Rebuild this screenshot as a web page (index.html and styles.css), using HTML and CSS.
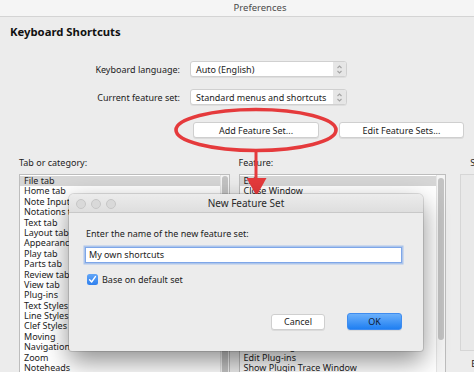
FILE: index.html
```html
<!DOCTYPE html>
<html lang="en">
<head>
    <meta charset="UTF-8">
    <meta name="viewport" content="width=device-width, initial-scale=1.0">
    <title>Preferences</title>
    <link rel="stylesheet" href="styles.css">
</head>
<body>
    <div class="window">
        <div class="titlebar">Preferences</div>
        <div class="content">
            <h1 class="heading">Keyboard Shortcuts</h1>
            <div class="form">
                <div class="form-row">
                    <span class="form-label">Keyboard language:</span>
                    <div class="popup">
                        <span class="popup-value">Auto (English)</span>
                        <span class="popup-arrows">
                            <svg width="13" height="15" viewBox="0 0 13 15"><path d="M4.5 6 L6.5 4 L8.5 6 M4.5 9 L6.5 11 L8.5 9" fill="none" stroke="#a3a3a3" stroke-width="1.1"/></svg>
                        </span>
                    </div>
                </div>
                <div class="form-row">
                    <span class="form-label">Current feature set:</span>
                    <div class="popup">
                        <span class="popup-value">Standard menus and shortcuts</span>
                        <span class="popup-arrows">
                            <svg width="13" height="15" viewBox="0 0 13 15"><path d="M4.5 6 L6.5 4 L8.5 6 M4.5 9 L6.5 11 L8.5 9" fill="none" stroke="#a3a3a3" stroke-width="1.1"/></svg>
                        </span>
                    </div>
                </div>
            </div>
            <div class="actions">
                <div class="button add">Add Feature Set...</div>
                <div class="button edit">Edit Feature Sets...</div>
            </div>
            <div class="lists">
                <div class="column category">
                    <div class="column-label">Tab or category:</div>
                    <div class="listbox">
                        <ul class="items">
                            <li class="selected">File tab</li>
                            <li>Home tab</li>
                            <li>Note Input tab</li>
                            <li>Notations tab</li>
                            <li>Text tab</li>
                            <li>Layout tab</li>
                            <li>Appearance tab</li>
                            <li>Play tab</li>
                            <li>Parts tab</li>
                            <li>Review tab</li>
                            <li>View tab</li>
                            <li>Plug-ins</li>
                            <li>Text Styles</li>
                            <li>Line Styles</li>
                            <li>Clef Styles</li>
                            <li>Moving</li>
                            <li>Navigation</li>
                            <li>Zoom</li>
                            <li>Noteheads</li>
                        </ul>
                        <div class="scrollbar"><div class="thumb"></div></div>
                    </div>
                </div>
                <div class="column feature">
                    <div class="column-label">Feature:</div>
                    <div class="listbox">
                        <ul class="items">
                            <li class="selected">Exit</li>
                            <li>Close Window</li>
                            <li>New</li>
                            <li>Open</li>
                            <li>Save</li>
                            <li>Save As</li>
                            <li>Export Audio</li>
                            <li>Export Graphics</li>
                            <li>Print</li>
                            <li>Import</li>
                            <li>Append Score</li>
                            <li>Score Info</li>
                            <li>Preferences</li>
                            <li>Manuscript Paper</li>
                            <li>Reload Plug-ins</li>
                            <li>Plug-in Installer</li>
                            <li>Unload Plug-ins</li>
                            <li>Edit Plug-ins</li>
                            <li>Show Plugin Trace Window</li>
                        </ul>
                        <div class="scrollbar"><div class="thumb"></div></div>
                    </div>
                </div>
                <div class="column side">
                    <div class="column-label">Shortcuts:</div>
                    <div class="panel"></div>
                    <div class="side-button">Edit...</div>
                </div>
            </div>
        </div>

        <svg class="annotation" width="520" height="372" viewBox="0 0 520 372">
            <ellipse cx="256" cy="130" rx="80" ry="20.5" fill="none" stroke="#e53a3c" stroke-width="3.6"/>
            <line x1="256" y1="151" x2="256" y2="181" stroke="#e53a3c" stroke-width="3"/>
            <polygon points="246.5,178 266.5,178 256.5,196" fill="#e53a3c"/>
        </svg>

        <div class="dialog">
            <div class="dialog-titlebar">
                <div class="lights">
                    <span class="light"></span>
                    <span class="light"></span>
                    <span class="light"></span>
                </div>
                New Feature Set
            </div>
            <div class="dialog-body">
                <div class="prompt">Enter the name of the new feature set:</div>
                <div class="textfield">My own shortcuts</div>
                <div class="check-row">
                    <span class="checkbox">
                        <svg width="11" height="11" viewBox="0 0 11 11"><path d="M2.6 5.8 L4.6 8 L8.4 2.6" fill="none" stroke="#fff" stroke-width="1.4" stroke-linecap="round" stroke-linejoin="round"/></svg>
                    </span>
                    <span>Base on default set</span>
                </div>
                <div class="dialog-buttons">
                    <div class="button cancel">Cancel</div>
                    <div class="button ok">OK</div>
                </div>
            </div>
        </div>
    </div>
</body>
</html>
```

FILE: styles.css
```css
body {
    margin: 0;
    width: 474px;
    height: 372px;
    overflow: hidden;
    background: #ececec;
    font-family: "Noto Sans", "DejaVu Sans", sans-serif;
    font-size: 9px;
    color: #1c1c1c;
}
.window {
    position: relative;
    width: 520px;
    height: 372px;
    background: #ececec;
    overflow: hidden;
}
.titlebar {
    height: 16px;
    line-height: 16px;
    background: #f5f5f5;
    border-bottom: 1px solid #d4d4d4;
    text-align: center;
    font-size: 9.5px;
    color: #4b4b4b;
}
.content {
    padding-left: 10px;
}
.heading {
    margin: 8px 0 0;
    font-size: 11.3px;
    line-height: 14px;
    font-weight: bold;
    color: #111;
}
.form {
    margin-top: 22px;
    display: flex;
    flex-direction: column;
    gap: 12px;
}
.form-row {
    display: flex;
    align-items: center;
}
.form-label {
    width: 170px;
    padding-right: 10px;
    text-align: right;
}
.popup {
    width: 157px;
    height: 16px;
    box-sizing: border-box;
    display: flex;
    align-items: center;
    background: #fff;
    border: 1px solid #d0d0d0;
    border-radius: 3px;
    box-shadow: 0 1px 0 rgba(0, 0, 0, 0.06);
    overflow: hidden;
}
.popup-value {
    flex: 1;
    padding-left: 5px;
    white-space: nowrap;
}
.popup-arrows {
    width: 13px;
    height: 100%;
    display: flex;
    align-items: center;
    justify-content: center;
    background: #e6e6e6;
}
.actions {
    margin-top: 17px;
    padding-left: 183px;
    display: flex;
    gap: 20px;
}
.button {
    height: 16px;
    box-sizing: border-box;
    display: flex;
    align-items: center;
    justify-content: center;
    background: #fff;
    border: 1px solid #cfcfcf;
    border-radius: 3px;
    box-shadow: 0 1px 0 rgba(0, 0, 0, 0.07);
    white-space: nowrap;
}
.button.add {
    width: 126px;
}
.button.edit {
    width: 125px;
}
.lists {
    margin-top: 19px;
    margin-left: 9px;
    display: flex;
}
.column-label {
    height: 12px;
    line-height: 12px;
    margin-bottom: 5px;
    white-space: nowrap;
}
.category {
    width: 211px;
}
.feature {
    width: 208px;
    margin-left: 9px;
}
.side {
    margin-left: 14px;
    width: 60px;
}
.listbox {
    height: 210px;
    box-sizing: border-box;
    display: flex;
    background: #fff;
    border: 1px solid #bdbdbd;
}
.items {
    flex: 1;
    margin: 0;
    padding: 1px 0 0;
    list-style: none;
    overflow: hidden;
}
.items li {
    height: 10.4px;
    line-height: 10.4px;
    padding-left: 4px;
    white-space: nowrap;
}
.items li.selected {
    background: #d6d6d6;
}
.scrollbar {
    width: 9px;
    background: #f4f4f4;
    border-left: 1px solid #e4e4e4;
    padding: 1px 0 0 1px;
    box-sizing: border-box;
}
.thumb {
    width: 6px;
    height: 300px;
    border-radius: 3px;
    background: #c3c3c3;
}
.feature .scrollbar {
    padding-top: 3px;
}
.feature .thumb {
    height: 162px;
}
.side .column-label {
    padding-left: 10px;
}
.panel {
    height: 175px;
    background: #e9e9e9;
    border: 1px solid #d6d6d6;
}
.side-button {
    margin-top: 6px;
    padding-left: 11px;
}
.annotation {
    position: absolute;
    left: 0;
    top: 0;
}
.dialog {
    position: absolute;
    left: 69px;
    top: 194px;
    width: 354px;
    height: 157px;
    display: flex;
    flex-direction: column;
    background: #ececec;
    border-radius: 5px 5px 3px 3px;
    box-shadow: 0 0 0 1px rgba(0, 0, 0, 0.12), 0 10px 26px rgba(0, 0, 0, 0.45);
    overflow: hidden;
}
.dialog-titlebar {
    position: relative;
    height: 18px;
    line-height: 18px;
    background: linear-gradient(#ececec, #dedede);
    border-bottom: 1px solid #c8c8c8;
    text-align: center;
    font-size: 10px;
    color: #2a2a2a;
}
.lights {
    position: absolute;
    left: 7px;
    top: 5px;
    display: flex;
    gap: 5px;
}
.light {
    width: 10px;
    height: 10px;
    box-sizing: border-box;
    border-radius: 50%;
    background: #d9d9d9;
    border: 1px solid #c6c6c6;
}
.dialog-body {
    flex: 1;
    display: flex;
    flex-direction: column;
    padding: 15px 21px 21px 17px;
}
.prompt {
    line-height: 12px;
}
.textfield {
    margin: 7px 0 0 -1px;
    height: 16px;
    line-height: 14px;
    box-sizing: border-box;
    padding-left: 3px;
    background: #fff;
    border: 1px solid #7ea6e8;
    box-shadow: 0 0 0 1.5px rgba(120, 165, 235, 0.55);
}
.check-row {
    margin: 11px 0 0 1px;
    height: 11px;
    display: flex;
    align-items: center;
    gap: 4px;
}
.checkbox {
    width: 11px;
    height: 11px;
    display: flex;
    border-radius: 2.5px;
    background: linear-gradient(#63a6f7, #2f80ee);
}
.dialog-buttons {
    margin-top: auto;
    display: flex;
    justify-content: flex-end;
    align-items: center;
    gap: 22px;
}
.button.cancel {
    width: 54px;
}
.button.ok {
    width: 55px;
    height: 17px;
    border: 1px solid #3f8cef;
    background: linear-gradient(#6bb0fb, #1f7ff2);
    color: #0e1b33;
}
```
